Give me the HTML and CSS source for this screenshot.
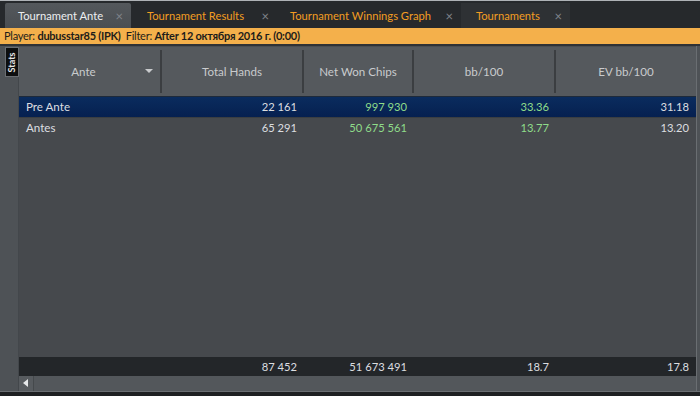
FILE: index.html
```html
<!DOCTYPE html>
<html>
<head>
<meta charset="utf-8">
<link rel="stylesheet" href="styles.css">
</head>
<body>
<div class="app">
  <div class="tabbar">
    <div class="tab active t1"><span>Tournament Ante</span><span class="x">×</span></div>
    <div class="tab t2"><span>Tournament Results</span><span class="x">×</span></div>
    <div class="tab t3"><span>Tournament Winnings Graph</span><span class="x">×</span></div>
    <div class="tab t4"><span>Tournaments</span><span class="x">×</span></div>
  </div>
  <div class="filterbar">Player: <b>dubusstar85 (IPK)</b>&nbsp;&nbsp;Filter: <b>After 12 октября 2016 г. (0:00)</b></div>
  <div class="main">
    <div class="side"><div class="stats"><span>Stats</span></div></div>
    <div class="table">
      <div class="head row">
        <div class="hc first">Ante<span class="tri"></span></div>
        <div class="hc">Total Hands</div>
        <div class="hc">Net Won Chips</div>
        <div class="hc">bb/100</div>
        <div class="hc">EV bb/100</div>
      </div>
      <div class="body">
        <div class="row data sel">
          <div class="c name">Pre Ante</div>
          <div class="c">22 161</div>
          <div class="c g">997 930</div>
          <div class="c g">33.36</div>
          <div class="c">31.18</div>
        </div>
        <div class="row data alt">
          <div class="c name">Antes</div>
          <div class="c">65 291</div>
          <div class="c g">50 675 561</div>
          <div class="c g">13.77</div>
          <div class="c">13.20</div>
        </div>
      </div>
      <div class="row total">
        <div class="c name"></div>
        <div class="c">87 452</div>
        <div class="c">51 673 491</div>
        <div class="c">18.7</div>
        <div class="c">17.8</div>
      </div>
      <div class="hscroll"><div class="arrow"></div><div class="track"></div></div>
    </div>
    <div class="rside"></div>
  </div>
  <div class="bottom"></div>
</div>
</body>
</html>
```
FILE: styles.css
```css
html, body { margin: 0; padding: 0; }
body {
  width: 700px; height: 396px; overflow: hidden;
  font-family: Lato, "Noto Sans", sans-serif;
  font-size: 12px;
  background: #46494d;
}
.app { display: flex; flex-direction: column; height: 396px; }
.tabbar {
  height: 27px; background: #26292c; border-top: 1px solid #aeb2b6;
  display: flex; align-items: flex-end; padding-left: 5px;
}
.tab {
  height: 25px; display: flex; align-items: center; justify-content: space-between;
  padding: 0 8px 0 13px; box-sizing: border-box; color: #f29d22;
  background: #2c2f32; font-size: 11.2px; white-space: nowrap;
}
.tab.active { background: linear-gradient(#54585c, #4a4e52); color: #eceef0; border-radius: 2px 2px 0 0; }
.t1 { width: 126px; }
.t2 { width: 146px; padding-left: 16px; background: #26292c; }
.t3 { width: 184px; padding-left: 13px; background: #26292c; }
.t4 { width: 109px; padding-left: 15px; background: #2e3134; }
.x { color: #80848a; font-size: 13px; }
.filterbar {
  height: 16px; line-height: 16px; background: #f4b04b; color: #1d1c1a;
  padding-left: 4px; white-space: nowrap; border-bottom: 2px solid #2f3236;
  font-size: 11px; letter-spacing: -0.25px;
}
.filterbar b { font-weight: 700; }
.main { flex: 1; display: flex; min-height: 0; }
.side { width: 19px; background: #4e5256; border-right: 1px solid #43474b; box-sizing: border-box; padding: 1px 0 0 5px; }
.stats {
  width: 14px; height: 30px; background: #0d0e0f; border: 1px solid #6a6e72; box-sizing: border-box;
  display: flex; align-items: center; justify-content: center;
}
.stats span { transform: rotate(-90deg); color: #e6e6e6; font-size: 9px; font-weight: 700; white-space: nowrap; }
.table { width: 677px; display: flex; flex-direction: column; }
.rside { flex: 1; background: #4e5256; border-left: 1px solid #6a6e72; }
.row { display: grid; grid-template-columns: 143px 142px 110px 142px 140px; }
.head { height: 49px; background: #55595d; border-top: 1px solid #4a4e52; border-bottom: 1px solid #1e2a3a; }
.hc {
  color: #c9cbcd; font-size: 11.6px; display: flex; align-items: center; justify-content: center;
  border-right: 2px solid #3b3e41; margin: 3px 0; position: relative;
}
.hc:last-child { border-right: none; }
.first { padding-right: 12px; }
.tri {
  position: absolute; right: 7px; top: 19px; width: 0; height: 0;
  border-left: 4px solid transparent; border-right: 4px solid transparent; border-top: 4px solid #c9cbcd;
}
.body { flex: 1; background: #46494d; }
.data { height: 20px; line-height: 20px; }
.sel { background: linear-gradient(#0a2c5e, #062050); border-bottom: 1px solid #3a3e42; }
.alt { background: #46494d; }
.c { text-align: right; padding-right: 7px; color: #dcdee0; font-size: 11.2px; white-space: nowrap; }
.c.name { text-align: left; padding-left: 7px; font-size: 11.6px; }
.g { color: #8fdc8a; }
.total { height: 19px; line-height: 19px; background: #232629; }
.hscroll { height: 15px; background: #53575b; display: flex; }
.arrow {
  width: 15px; height: 15px; background: #575b5f; border-right: 1px solid #45494c; box-sizing: border-box;
  position: relative;
}
.arrow::after {
  content: ""; position: absolute; left: 4px; top: 3px; width: 0; height: 0;
  border-top: 4px solid transparent; border-bottom: 4px solid transparent; border-right: 5px solid #e6e8ea;
}
.track { flex: 1; }
.bottom { height: 4px; background: #1e2022; border-top: 1px solid #6a6e72; }
```
